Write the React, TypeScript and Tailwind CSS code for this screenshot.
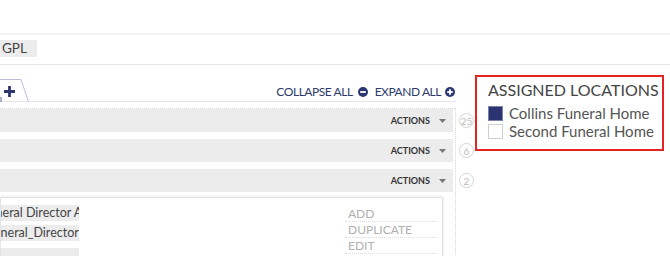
import React from "react";

const NAVY = "#2c3770";

function Caret() {
  return (
    <svg width="7" height="4" viewBox="0 0 7 4" className="block">
      <path d="M0 0 H7 L3.5 4 Z" fill="#777" />
    </svg>
  );
}

function CircleIcon({ plus }: { plus?: boolean }) {
  return (
    <svg width="10" height="10" viewBox="0 0 10 10" className="block">
      <circle cx="5" cy="5" r="5" fill={NAVY} />
      <rect x="2.2" y="4.1" width="5.6" height="1.8" fill="#fff" />
      {plus && <rect x="4.1" y="2.2" width="1.8" height="5.6" fill="#fff" />}
    </svg>
  );
}

function Row() {
  return (
    <div className="w-[453px] h-[23px] bg-[#ececec] flex items-center justify-end pr-[7px] gap-[9px]">
      <span className="text-[9px] font-bold text-[#333] leading-none">ACTIONS</span>
      <Caret />
    </div>
  );
}

function Count({ n }: { n: string }) {
  return (
    <div className="h-[23px] flex items-center">
      <div className="w-[15px] h-[15px] rounded-full border border-[#d4d4d4] flex items-center justify-center text-[10px] text-[#bbb] leading-none">
        {n}
      </div>
    </div>
  );
}

export default function App() {
  return (
    <div className="w-[670px] h-[256px] overflow-hidden bg-white font-['Lato',_'Noto_Sans',_sans-serif]">
      <div className="h-[33px]" />
      <div className="h-[2px] bg-[#f3f3f3]" />
      <div className="h-[30px] border-b border-[#e8e8e8] pt-[5px]">
        <div className="w-[37px] h-[17px] bg-[#ececec] text-[13.5px] leading-[17px] text-[#444] pl-[2px]">GPL</div>
      </div>
      <div className="flex">
        <div className="w-[475px]">
          <div className="w-[456px] h-[37px] border-b border-[#e6e6e6] flex justify-between">
            <svg width="30" height="24" viewBox="0 0 30 24" className="block mt-[14px]">
              <path d="M-2 0.5 H21 L28.5 23" fill="#fff" stroke="#b9c0d6" strokeWidth="1" />
              <path d="M1 23 V18" stroke="#5a628c" strokeWidth="1" />
              <path d="M4 12.5 H15 M9.5 7 V18" stroke={NAVY} strokeWidth="2.8" />
            </svg>
            <div className="flex items-center mt-[20px] h-[14px] pr-[1px] text-[12px] tracking-[-0.45px] text-[#2d3a6b] leading-none">
              <span>COLLAPSE ALL</span>
              <span className="ml-[5px]"><CircleIcon /></span>
              <span className="ml-[7px]">EXPAND ALL</span>
              <span className="ml-[4px]"><CircleIcon plus /></span>
            </div>
          </div>
          <div className="flex mt-[6px]">
            <div className="w-[456px] border-r border-dotted border-[#d8d8d8]">
              <div className="border-t border-dotted border-[#d8d8d8] flex flex-col gap-[7px]">
                <Row />
                <Row />
                <Row />
              </div>
              <div className="mt-[5px] w-[443px] h-[70px] border border-[#e4e4e4] shadow-[0_0_3px_rgba(0,0,0,0.12)] flex justify-between">
                <div className="pt-[7px] text-[12.5px] text-[#444] leading-[16px]">
                  <div className="w-[78px] h-[16px] bg-[#ececec] overflow-hidden whitespace-nowrap">
                    <span className="ml-[-19px]">Funeral Director Arrangement</span>
                  </div>
                  <div className="mt-[4px] w-[78px] h-[16px] bg-[#ececec] overflow-hidden whitespace-nowrap">
                    <span className="ml-[-14px]">Funeral_Director_arrangement</span>
                  </div>
                  <div className="mt-[7px] w-[78px] h-[16px] bg-[#ececec]" />
                </div>
                <div className="w-[92px] mr-[5px] pt-[8px] text-[12px] text-[#b0b0b0] leading-[15px]">
                  <div className="border-b border-dotted border-[#dcdcdc] pl-[3px]">ADD</div>
                  <div className="border-b border-dotted border-[#dcdcdc] pl-[3px]">DUPLICATE</div>
                  <div className="border-b border-dotted border-[#dcdcdc] pl-[3px]">EDIT</div>
                </div>
              </div>
            </div>
            <div className="pl-[3px] pt-[1px] flex flex-col gap-[7px]">
              <Count n="25" />
              <Count n="6" />
              <Count n="2" />
            </div>
          </div>
        </div>
        <div className="mt-[10px] w-[189px] h-[76px] border-2 border-[#e42424] pl-[11px] pt-[3px]">
          <div className="text-[16px] leading-[20px] text-[#444]">ASSIGNED LOCATIONS</div>
          <div className="mt-[4px] flex items-center h-[18px] gap-[6px]">
            <div className="w-[15px] h-[15px] bg-[#2b3471] border border-[#7a82aa]" />
            <span className="text-[15px] text-[#555] leading-none">Collins Funeral Home</span>
          </div>
          <div className="flex items-center h-[18px] gap-[6px]">
            <div className="w-[15px] h-[15px] bg-white border border-[#d0d0d0]" />
            <span className="text-[15px] text-[#555] leading-none">Second Funeral Home</span>
          </div>
        </div>
      </div>
    </div>
  );
}
